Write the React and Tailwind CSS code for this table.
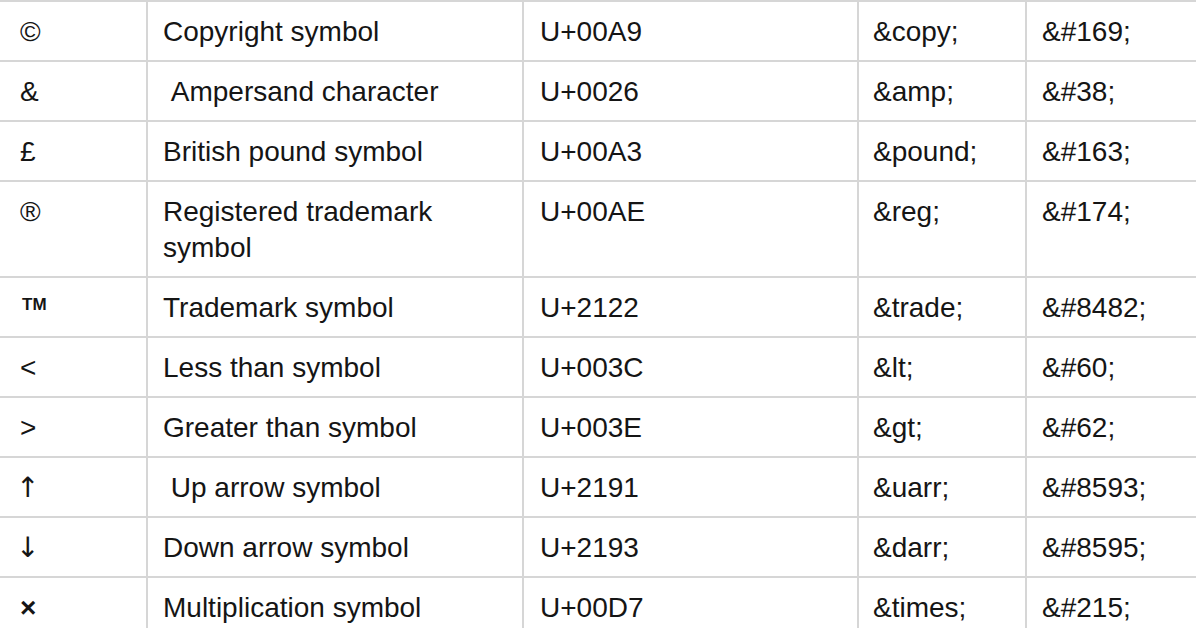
import React from 'react'

const rows = [
    ['©', 'Copyright symbol', 'U+00A9', '&copy;', '&#169;'],
    ['&', ' Ampersand character', 'U+0026', '&amp;', '&#38;'],
    ['£', 'British pound symbol', 'U+00A3', '&pound;', '&#163;'],
    ['®', 'Registered trademark symbol', 'U+00AE', '&reg;', '&#174;'],
    ['™', 'Trademark symbol', 'U+2122', '&trade;', '&#8482;'],
    ['<', 'Less than symbol', 'U+003C', '&lt;', '&#60;'],
    ['>', 'Greater than symbol', 'U+003E', '&gt;', '&#62;'],
    ['↑', ' Up arrow symbol', 'U+2191', '&uarr;', '&#8593;'],
    ['↓', 'Down arrow symbol', 'U+2193', '&darr;', '&#8595;'],
    ['×', 'Multiplication symbol', 'U+00D7', '&times;', '&#215;'],
];

function Symbol({ s }) {
    if (s === '™') {
        return <span className="inline-block align-top text-[17px] leading-none font-bold mt-[6px] ml-[2px]">TM</span>;
    }
    if (s === '↑' || s === '↓') {
        return <span className="font-['DejaVu_Sans',sans-serif] -ml-[4px]">{s}</span>;
    }
    if (s === '×') {
        return <span className="font-bold">{s}</span>;
    }
    return s;
}

export default function App() {
    return (
        <div className="w-[1196px] h-[628px] overflow-hidden bg-white text-[#151515] font-['Liberation_Sans',Arial,sans-serif] text-[28px] leading-[36px]">
            <table className="table-fixed border-collapse w-[1220px] border-t-2 border-[#d6d6d6]">
                <colgroup>
                    <col className="w-[147px]" />
                    <col className="w-[376px]" />
                    <col className="w-[335px]" />
                    <col className="w-[168px]" />
                    <col />
                </colgroup>
                <tbody>
                    {rows.map((r, i) => (
                        <tr key={i} className="border-b-2 border-[#d6d6d6] align-top">
                            <td className="pl-[20px] pt-[12px] pb-[10px] border-r-2 border-[#d6d6d6] h-[60px]">
                                <Symbol s={r[0]} />
                            </td>
                            <td className="pl-[15px] pr-[60px] pt-[12px] pb-[10px] border-r-2 border-[#d6d6d6] whitespace-pre-wrap">{r[1]}</td>
                            <td className="pl-[16px] pt-[12px] pb-[10px] border-r-2 border-[#d6d6d6]">{r[2]}</td>
                            <td className="pl-[14px] pt-[12px] pb-[10px] border-r-2 border-[#d6d6d6]">{r[3]}</td>
                            <td className="pl-[15px] pt-[12px] pb-[10px]">{r[4]}</td>
                        </tr>
                    ))}
                </tbody>
            </table>
        </div>
    );
}
